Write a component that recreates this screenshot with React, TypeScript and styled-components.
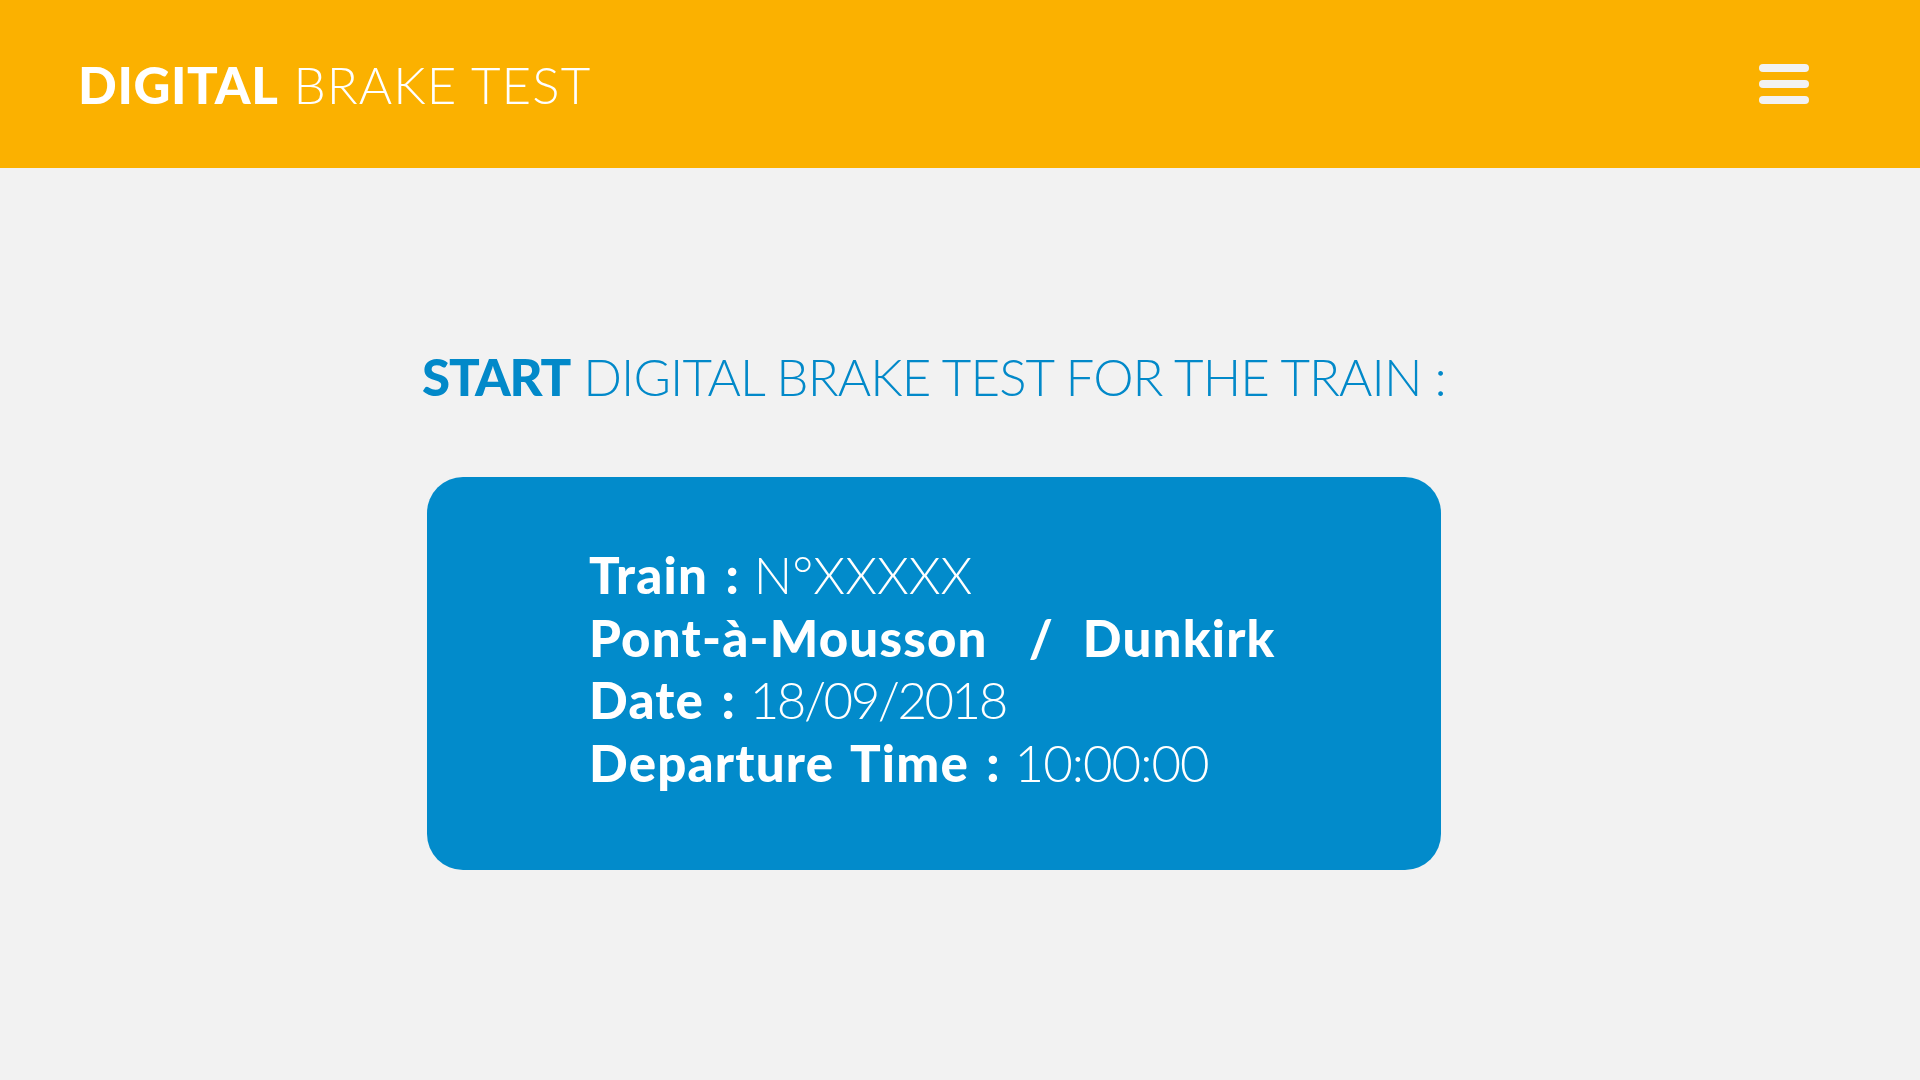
import React from 'react';
import styled, { createGlobalStyle } from 'styled-components';

const GlobalStyle = createGlobalStyle`
  html, body {
    margin: 0;
    padding: 0;
    background: #f2f2f2;
    font-family: Lato, 'Liberation Sans', sans-serif;
  }
`;

const Page = styled.div`
  width: 1920px;
  min-height: 1080px;
  background: #f2f2f2;
`;

const Header = styled.header`
  height: 168px;
  background: #fbb100;
  display: flex;
  align-items: center;
  justify-content: space-between;
  padding: 0 111px 0 78px;
  box-sizing: border-box;
`;

const Brand = styled.h1`
  margin: 0;
  font-size: 51px;
  line-height: 1.2;
  font-weight: 300;
  color: #ffffff;
  letter-spacing: 1.1px;
  padding-top: 2px;

  strong {
    font-weight: 900;
    letter-spacing: 0.6px;
  }
`;

const MenuButton = styled.button`
  display: flex;
  flex-direction: column;
  gap: 8px;
  padding: 0;
  border: none;
  background: transparent;
  cursor: pointer;
`;

const MenuBar = styled.span`
  display: block;
  width: 50px;
  height: 8px;
  border-radius: 4px;
  background: #f2f2f2;
`;

const Main = styled.main`
  display: flex;
  flex-direction: column;
  align-items: center;
  padding: 178px 52px 0 0;
`;

const Heading = styled.h2`
  margin: 0;
  font-size: 51px;
  line-height: 1.2;
  font-weight: 300;
  color: #0289c9;
  letter-spacing: -0.9px;

  strong {
    font-weight: 900;
    letter-spacing: -1.2px;
  }
`;

const Card = styled.section`
  margin-top: 70px;
  width: 1014px;
  height: 393px;
  box-sizing: border-box;
  padding: 67px 0 0 162px;
  border-radius: 36px;
  background: #028bcb;
  color: #ffffff;
`;

const Line = styled.div`
  font-size: 51px;
  line-height: 62.5px;
  font-weight: 300;
  white-space: pre;
`;

const Label = styled.span`
  font-weight: 900;
  letter-spacing: 1.2px;
  word-spacing: 4px;
`;

const Slash = styled.span`
  font-weight: 900;
  margin: 0 30px 0 41px;
`;

const Value = styled.span<{ $spacing?: number }>`
  letter-spacing: ${(p) => p.$spacing ?? 0}px;
`;

export default function App() {
  return (
    <Page>
      <GlobalStyle />
      <Header>
        <Brand>
          <strong>DIGITAL</strong> BRAKE TEST
        </Brand>
        <MenuButton aria-label="Menu">
          <MenuBar />
          <MenuBar />
          <MenuBar />
        </MenuButton>
      </Header>
      <Main>
        <Heading>
          <strong>START</strong> DIGITAL BRAKE TEST FOR THE TRAIN :
        </Heading>
        <Card>
          <Line>
            <Label>Train :</Label> <Value>N°XXXXX</Value>
          </Line>
          <Line>
            <Label>Pont-à-Mousson</Label>
            <Slash>/</Slash>
            <Label>Dunkirk</Label>
          </Line>
          <Line>
            <Label>Date :</Label> <Value $spacing={-2.5}>18/09/2018</Value>
          </Line>
          <Line>
            <Label>Departure Time :</Label> <Value $spacing={-1}>10:00:00</Value>
          </Line>
        </Card>
      </Main>
    </Page>
  );
}
